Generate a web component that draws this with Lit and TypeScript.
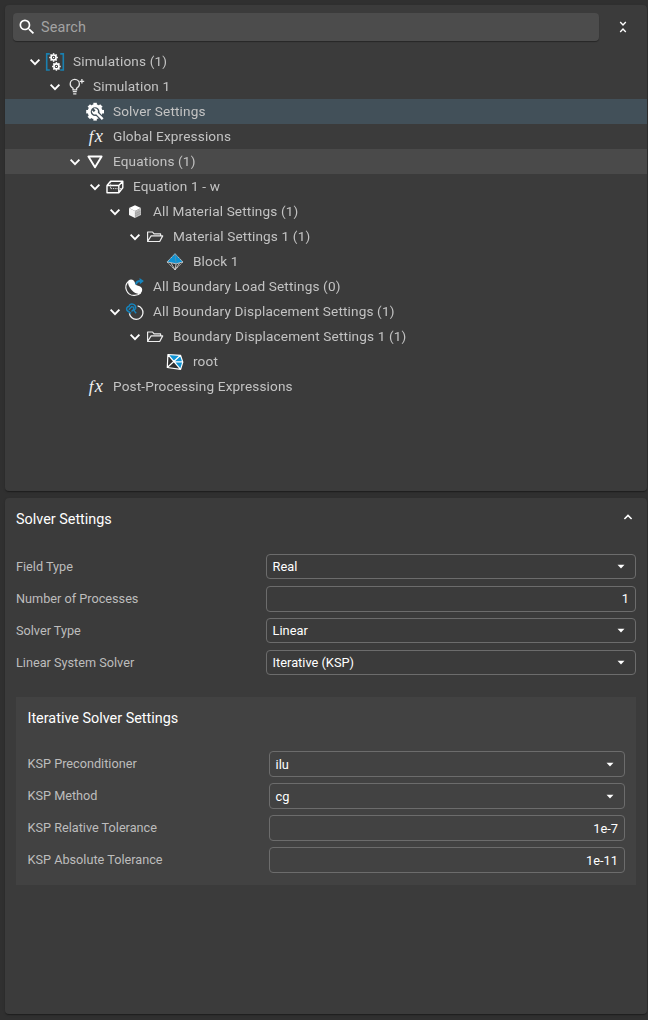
import { LitElement, html, css, svg, nothing, type TemplateResult } from "lit";
import { customElement, property, state } from "lit/decorators.js";
import { classMap } from "lit/directives/class-map.js";

const teeth = (cx: number, cy: number, inner: number, outer: number, n: number, width: number) =>
  Array.from({ length: n }, (_, i) => {
    const a = (i * 2 * Math.PI) / n;
    return svg`<line x1=${cx + inner * Math.cos(a)} y1=${cy + inner * Math.sin(a)}
      x2=${cx + outer * Math.cos(a)} y2=${cy + outer * Math.sin(a)} stroke="#fff" stroke-width=${width} />`;
  });

// Every glyph uses a 20 x 25 canvas, the size of the icon cell in a tree row.
const icons: Record<string, TemplateResult> = {
  simulations: svg`
    <path d="M4.800 4.900H1.700V21H4.800M15.200 4.900h3.100V21H15.200" fill="none" stroke="#1a80b0" stroke-width="1.600"/>
    <circle cx="8.600" cy="8.500" r="2.500" fill="none" stroke="#fff" stroke-width="1.600"/>
    ${teeth(8.6, 8.5, 2.8, 4.3, 8, 1.5)}<circle cx="8.600" cy="8.500" r=".7" fill="#fff"/>
    <circle cx="11.400" cy="17.400" r="2.500" fill="none" stroke="#fff" stroke-width="1.600"/>
    ${teeth(11.4, 17.4, 2.8, 4.3, 8, 1.5)}<circle cx="11.400" cy="17.400" r=".7" fill="#fff"/>`,
  bulb: svg`
    <path d="M8 15.800v-1.600C6.300 13.300 5.200 11.800 5.200 10a4.600 4.600 0 0 1 9.200 0c0 1.800-1.100 3.300-2.800 4.200v1.600z" fill="none" stroke="#e6e6e6" stroke-width="1.300"/>
    <path d="M7.800 17.600h4M8.200 19.900h3.200" stroke="#e6e6e6" stroke-width="1.300"/>
    <path d="M16.900 5v4.600M14.600 7.300h4.600" stroke="#e6e6e6" stroke-width="1.300"/>`,
  solver: svg`
    <circle cx="10.100" cy="12.700" r="5.900" fill="none" stroke="#fff" stroke-width="3"/>
    ${teeth(10.1, 12.7, 6.5, 8.9, 8, 3.5)}
    <path d="M11 13.500l7.200 7.200" stroke="#42505a" stroke-width="4.600"/>
    <path d="M11 13.500l6.700 6.700" stroke="#fff" stroke-width="2.400"/>
    <path d="M6.900 11.200l1.900 1.900 1.700-1.600-1.900-2c1.700-.7 3.500.1 4.200 1.700.6 1.800-.4 3.700-2.200 4.200-2.100.5-4.200-1.700-3.700-4.200z" fill="#fff"/>`,
  fx: svg`<text x="3.700" y="17.500" fill="#f2f2f2" font-family="Liberation Serif, serif" font-style="italic" font-size="17">f<tspan x="9.800" font-size="18.500">x</tspan></text>`,
  equations: svg`<path d="M3.400 7.500h13.200L10 18.200z" fill="none" stroke="#fff" stroke-width="1.900" stroke-linejoin="round"/>`,
  beam: svg`
    <path d="M2 11.500h11.800v7.300H2zM2 11.500l3.600-4.200h12.200l-4 4.200M17.800 7.300v6.400l-4 5.100" fill="none" stroke="#fff" stroke-width="1.400" stroke-linejoin="round"/>
    <path d="M5.600 8v6.500M5.600 14.600h11" fill="none" stroke="#ddd" stroke-width="1" stroke-dasharray="1.300 1"/>`,
  cube: svg`
    <path d="M10 6.200l6 2.900-6 3-6-3z" fill="#fff"/>
    <path d="M4 9.100l6 3v7l-6-3.100z" fill="#f4f4f4"/>
    <path d="M10 12.100l6-3v6.900l-6 3.100z" fill="#c4c4c4"/>
    <path d="M10.300 12.300v6.500M12.100 11.600v6.100M14 10.500v6.200M10.300 14.700l5.500-2.700M10.300 16.800l5.500-2.700" stroke="#8b8b8b" stroke-width=".5"/>`,
  folder: svg`<path d="M2.600 17.500V8h4.900l1.500 1.900h6.600v2M2.600 17.500l3.500-5.600h11.600l-3 5.600z" fill="none" stroke="#ececec" stroke-width="1.200" stroke-linejoin="round"/>`,
  block: svg`
    <path d="M10 4.700l7.900 8.200-7.900 8-7.900-8z" fill="#333"/>
    <path d="M10 4.700l7.900 8.200-6.800 1.700-9-1.700z" fill="#0e93d4"/>
    <path d="M10 4.700l7.900 8.200-7.900 8-7.900-8z" fill="none" stroke="#dedede" stroke-width=".8" stroke-dasharray="1.800 .5"/>
    <path d="M2.100 12.900l9 1.900 6.800-1.900M11.100 14.800L10 20.900M6 14l4 6.900 4.500-6.700" fill="none" stroke="#dedede" stroke-width=".8"/>
    <path d="M10 4.700l1.100 10" stroke="#5f91a9" stroke-width=".8"/>`,
  load: svg`
    <path d="M3.700 7.200A8.100 8.100 0 0 0 9.500 21.400c2.700 0 4.800-1 6.200-2.600" fill="none" stroke="#f4f4f4" stroke-width="1.200"/>
    <path d="M3.500 6.600C5.500 4.900 8.300 5.400 9.400 7.600c.7 1.500.6 2.900 2.200 3.700 2 .9 4.400 1 5.300 2.900.8 2-.1 4.200-1.600 5.400-2.300 1-5.600-.3-8.200-3C4.200 13.700 2.200 9.500 3.500 6.600z" fill="#fff"/>
    <path d="M11 10.400c.3-2.500 1.700-3.400 4.300-3.400" fill="none" stroke="#1685be" stroke-width="2"/>
    <path d="M14.500 3.900l4.400 3.100-4 3.300z" fill="#1685be"/>`,
  displacement: svg`
    <path d="M12.600 6.900a6.800 6.800 0 1 1-8.200 7.300" fill="none" stroke="#f2f2f2" stroke-width="1.300"/>
    <path d="M6 14.300L2 11.400C.9 9.500 2.100 8 3.900 7.600 4.200 5.600 6 4.600 7.800 5.100c2.200.7 3.400 2.500 2.700 4.600" fill="none" stroke="#1685be" stroke-width="1.500"/>
    <path d="M3.800 10.800l2.800-3.100 2.200.6-.3 2.200-2 2M10.500 9.700l-1.500 2 2.200 2.500" fill="none" stroke="#1685be" stroke-width="1.300"/>`,
  root: svg`
    <path d="M2.900 5.500l12.600.8 2.300 6.800-2.200 7.300-12.500-2z" fill="#303030"/>
    <path d="M3.300 5.700l12.200.6-6 6.500zM9.500 12.800l6-6.500 2.300 6.700-2.200 7.200z" fill="#0e93d4"/>
    <path d="M2.900 5.500l12.600.8 2.300 6.800-2.200 7.300-13.300-1.900zM2.900 5.500l12.700 14.900M2.300 18.500L15.500 6.300M9.500 12.900h8.300" fill="none" stroke="#fff" stroke-width="1.200" stroke-linejoin="round"/>`,
};

interface Node { level: number; icon: string; label: string; open?: boolean; hover?: boolean; }

const nodes: Node[] = [
  { level: 0, icon: "simulations", label: "Simulations (1)", open: true },
  { level: 1, icon: "bulb", label: "Simulation 1", open: true },
  { level: 2, icon: "solver", label: "Solver Settings" },
  { level: 2, icon: "fx", label: "Global Expressions" },
  { level: 2, icon: "equations", label: "Equations (1)", open: true, hover: true },
  { level: 3, icon: "beam", label: "Equation 1 - w", open: true },
  { level: 4, icon: "cube", label: "All Material Settings (1)", open: true },
  { level: 5, icon: "folder", label: "Material Settings 1 (1)", open: true },
  { level: 6, icon: "block", label: "Block 1" },
  { level: 4, icon: "load", label: "All Boundary Load Settings (0)" },
  { level: 4, icon: "displacement", label: "All Boundary Displacement Settings (1)", open: true },
  { level: 5, icon: "folder", label: "Boundary Displacement Settings 1 (1)", open: true },
  { level: 6, icon: "root", label: "root" },
  { level: 2, icon: "fx", label: "Post-Processing Expressions" },
];

@customElement("tree-row")
class TreeRow extends LitElement {
  @property({ attribute: false }) node!: Node;
  @property({ type: Boolean }) selected = false;

  static styles = css`
    :host { display: block; }
    .row { display: flex; height: 25px; align-items: center; box-sizing: border-box; cursor: pointer; }
    .selected { background: #425059; }
    .hover { background: #4a4a4a; }
    .toggle { width: 20px; height: 25px; flex: none; }
    .icon { width: 20px; height: 25px; flex: none; overflow: visible; }
    .label { padding-left: 8px; font-size: 13.6px; letter-spacing: .01071em; line-height: 25px; color: #c3c3c3; white-space: nowrap; will-change: transform; }
  `;

  render() {
    const n = this.node;
    return html`<div class=${classMap({ row: true, selected: this.selected, hover: !!n.hover })}
      style="padding-left:${20 + n.level * 20}px">
      <svg class="toggle" viewBox="0 0 20 25">
        ${n.open ? svg`<path d="M5.600 10.700l4.400 4.400 4.400-4.400" fill="none" stroke="#fff" stroke-width="1.900"/>` : nothing}
      </svg>
      <svg class="icon" viewBox="0 0 20 25">${icons[n.icon]}</svg>
      <span class="label">${n.label}</span>
    </div>`;
  }
}

@customElement("form-field")
class FormField extends LitElement {
  @property() label = "";
  @property() value = "";
  @property() kind = "select";
  @property({ type: Boolean }) nested = false;

  static styles = css`
    :host { display: block; height: 32px; }
    .field { display: grid; grid-template-columns: 250px 1fr; align-items: start; }
    .nested { grid-template-columns: 241.5px 1fr; }
    .label { font-size: 12.7px; line-height: 25px; color: #bdbdbd; white-space: nowrap; }
    .box { box-sizing: border-box; display: flex; align-items: center; justify-content: space-between;
      height: 25px; border: 1px solid #6c6c6c; border-radius: 4px; padding: 0 10px 0 5.6px;
      color: #fff; font-size: 12.8px; line-height: 23px; }
    .number, .nested .box { height: 26px; }
    .number { justify-content: flex-end; padding-right: 6px; padding-bottom: 2px; }
    .nested .number { padding-bottom: 0; }
    .arrow { width: 8px; height: 5px; }
  `;

  render() {
    return html`<div class=${classMap({ field: true, nested: this.nested })}>
      <span class="label">${this.label}</span>
      <div class=${classMap({ box: true, number: this.kind === "number" })}>
        <span>${this.value}</span>
        ${this.kind === "select"
          ? html`<svg class="arrow" viewBox="0 0 8 5"><path d="M.500 .800h7L4 4.500z" fill="#fff"/></svg>`
          : nothing}
      </div>
    </div>`;
  }
}

@customElement("app-root")
class AppRoot extends LitElement {
  @state() selected = 2;

  static styles = css`
    :host { display: flex; flex-direction: column; gap: 7px; box-sizing: border-box; height: 1020px;
      padding: 5px 1px 6px 5px; background: #303030; font-family: Roboto, sans-serif; overflow: hidden; }
    .panel { background: #3b3b3b; border-radius: 4px; box-sizing: border-box;
      box-shadow: 0 2px 1px -1px rgba(0,0,0,.2), 0 1px 1px rgba(0,0,0,.14), 0 1px 3px rgba(0,0,0,.12); }
    .tree { height: 486px; padding-top: 8px; flex: none; }
    .toolbar { display: flex; height: 36px; padding-left: 8px; align-items: flex-start; }
    .search { display: flex; align-items: center; width: 586px; height: 28px; background: #4c4c4c; border-radius: 4px;
      box-shadow: 0 1px 1px rgba(0,0,0,.35); color: #a3a3a3; font-size: 14.4px; line-height: 26px; letter-spacing: .01em; }
    .search span { padding-top: 2px; }
    .lens { width: 20px; height: 20px; margin: 0 4px; }
    .collapse { width: 14px; height: 14px; margin: 7px 0 0 17px; }
    .settings { flex: 1; padding: 0 11px; }
    .header { display: flex; justify-content: space-between; height: 56px; color: #fff; }
    .title { font-size: 14.4px; line-height: 44px; font-weight: 400; margin: 0; letter-spacing: 0; }
    .up { width: 10px; height: 8px; margin: 15px 3px 0 0; }
    .group { margin-top: 15px; height: 188px; box-sizing: border-box; background: #424242; padding: 0 11px 0 11.5px; }
    .group .title { height: 54px; color: #fff; }
  `;

  render() {
    return html`
      <section class="panel tree">
        <div class="toolbar">
          <div class="search">
            <svg class="lens" viewBox="0 0 24 24"><path fill="#fff" d="M15.500 14h-.79l-.28-.27A6.471 6.471 0 0 0 16 9.500 6.500 6.500 0 1 0 9.500 16c1.610 0 3.090-.590 4.230-1.570l.27.28v.79l5 4.990L20.490 19l-4.990-5zm-6 0C7.010 14 5 11.990 5 9.500S7.010 5 9.500 5 14 7.010 14 9.500 11.990 14 9.500 14z"/></svg>
            <span>Search</span>
          </div>
          <svg class="collapse" viewBox="0 0 14 14"><path d="M4.200 2.100L7 4.900l2.800-2.800M4.200 11.900L7 9.100l2.800 2.800" fill="none" stroke="#fff" stroke-width="1.400"/></svg>
        </div>
        ${nodes.map((n, i) => html`<tree-row .node=${n} ?selected=${i === this.selected}
          @click=${() => (this.selected = i)}></tree-row>`)}
      </section>
      <section class="panel settings">
        <div class="header">
          <h2 class="title">Solver Settings</h2>
          <svg class="up" viewBox="0 0 10 8"><path d="M1.400 6L5 2.400 8.600 6" fill="none" stroke="#fff" stroke-width="1.600"/></svg>
        </div>
        <form-field label="Field Type" value="Real"></form-field>
        <form-field label="Number of Processes" value="1" kind="number"></form-field>
        <form-field label="Solver Type" value="Linear"></form-field>
        <form-field label="Linear System Solver" value="Iterative (KSP)"></form-field>
        <div class="group">
          <h2 class="title">Iterative Solver Settings</h2>
          <form-field nested label="KSP Preconditioner" value="ilu"></form-field>
          <form-field nested label="KSP Method" value="cg"></form-field>
          <form-field nested label="KSP Relative Tolerance" value="1e-7" kind="number"></form-field>
          <form-field nested label="KSP Absolute Tolerance" value="1e-11" kind="number"></form-field>
        </div>
      </section>`;
  }
}
